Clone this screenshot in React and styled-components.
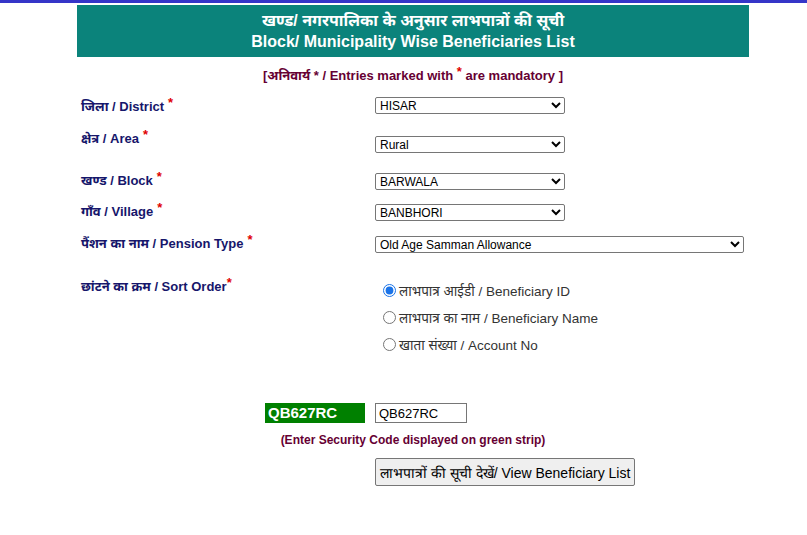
import React from 'react'
import styled, { createGlobalStyle } from 'styled-components'

const GlobalStyle = createGlobalStyle`
  body {
    margin: 0;
    background: #fff;
    font-family: Arial, "Liberation Sans", "Noto Sans", sans-serif;
  }
`

const TopBar = styled.div`
  height: 3px;
  background: #3535c8;
  margin-bottom: 2px;
`

const Page = styled.div`
  margin-left: 77px;
  width: 672px;
`

const Header = styled.div`
  background: #0b837b;
  height: 52px;
  display: flex;
  flex-direction: column;
  align-items: center;
  justify-content: center;
  color: #fff;
  font-weight: bold;
  font-size: 16px;
  line-height: 21px;
`

const Mandatory = styled.div`
  text-align: center;
  color: #660033;
  font-weight: bold;
  font-size: 13px;
  line-height: 16px;
  margin-top: 11px;
  margin-bottom: 7px;
`

const Star = styled.span`
  color: #e00000;
  font-weight: bold;
  position: relative;
  top: ${p => (p.$raised ? '-4px' : '0')};
  margin-left: ${p => (p.$tight ? '0' : '4px')};
`

const Row = styled.div`
  display: grid;
  grid-template-columns: 298px 1fr;
  height: ${p => p.$h}px;
  align-items: ${p => p.$align || 'center'};
  margin-top: ${p => p.$mt || 0}px;
`

const Label = styled.div`
  padding-left: 4px;
  color: #16166b;
  font-weight: bold;
  font-size: 13px;
  line-height: 16px;
  padding-bottom: ${p => p.$lift || 0}px;
  padding-top: ${p => p.$drop || 0}px;
`

const Select = styled.select`
  width: ${p => p.$w}px;
  height: 17px;
  box-sizing: border-box;
  font-family: Arial, "Liberation Sans", sans-serif;
  font-size: 12px;
  color: #000;
  border: 1px solid #767676;
  border-radius: 2px;
  background: #fff;
  padding: 0;
`

const RadioList = styled.div`
  display: flex;
  flex-direction: column;
  padding-left: 3px;
`

const RadioItem = styled.label`
  display: flex;
  align-items: center;
  height: 27px;
  font-size: 13.5px;
  color: #333;
`

const Radio = styled.input`
  width: 13px;
  height: 13px;
  margin: 0 3px 0 5px;
  accent-color: #1a73e8;
`

const CodeRow = styled.div`
  display: grid;
  grid-template-columns: 298px 1fr;
  align-items: center;
  margin-top: 44px;
`

const CodeStrip = styled.div`
  justify-self: end;
  margin-right: 10px;
  width: 100px;
  height: 20px;
  box-sizing: border-box;
  padding-left: 3px;
  background: #008000;
  color: #fff;
  font-weight: bold;
  font-size: 15px;
  line-height: 20px;
`

const CodeInput = styled.input`
  width: 92px;
  height: 20px;
  box-sizing: border-box;
  border: 1px solid #767676;
  padding: 0 3px;
  font-family: Arial, "Liberation Sans", sans-serif;
  font-size: 13px;
  color: #000;
`

const Note = styled.div`
  text-align: center;
  color: #660033;
  font-weight: bold;
  font-size: 12px;
  line-height: 16px;
  margin-top: 9px;
`

const ButtonRow = styled.div`
  padding-left: 298px;
  margin-top: 10px;
`

const Button = styled.button`
  height: 28px;
  padding: 0 4px;
  font-family: Arial, "Liberation Sans", sans-serif;
  font-size: 14px;
  color: #000;
  background: #efefef;
  border: 1px solid #767676;
  border-radius: 2px;
`

const fields = [
  { label: 'जिला / District', value: 'HISAR', h: 28, w: 190, drop: 4 },
  { label: 'क्षेत्र / Area', value: 'Rural', h: 50, w: 190, lift: 10 },
  { label: 'खण्ड / Block', value: 'BARWALA', h: 23, w: 190 },
  { label: 'गाँव / Village', value: 'BANBHORI', h: 39, w: 190 },
  { label: 'पैंशन का नाम / Pension Type', value: 'Old Age Samman Allowance', h: 25, w: 369 },
]

const sortOptions = [
  'लाभपात्र आईडी / Beneficiary ID',
  'लाभपात्र का नाम / Beneficiary Name',
  'खाता संख्या / Account No',
]

export default function App() {
  return (
    <>
      <GlobalStyle />
      <TopBar />
      <Page>
        <Header>
          <div>खण्ड/ नगरपालिका के अनुसार लाभपात्रों की सूची</div>
          <div>Block/ Municipality Wise Beneficiaries List</div>
        </Header>
        <Mandatory>
          [अनिवार्य * / Entries marked with <Star $raised $tight>*</Star> are mandatory ]
        </Mandatory>
        {fields.map(f => (
          <Row key={f.value} $h={f.h}>
            <Label $lift={f.lift} $drop={f.drop}>
              {f.label}
              <Star $raised>*</Star>
            </Label>
            <div>
              <Select $w={f.w} defaultValue={f.value}>
                <option>{f.value}</option>
              </Select>
            </div>
          </Row>
        ))}
        <Row $h={82} $align="start" $mt={21}>
          <Label $drop={2}>
            छांटने का क्रम / Sort Order<Star $raised $tight>*</Star>
          </Label>
          <RadioList>
            {sortOptions.map((o, i) => (
              <RadioItem key={o}>
                <Radio type="radio" name="sort" defaultChecked={i === 0} />
                {o}
              </RadioItem>
            ))}
          </RadioList>
        </Row>
        <CodeRow>
          <CodeStrip>QB627RC</CodeStrip>
          <div>
            <CodeInput defaultValue="QB627RC" />
          </div>
        </CodeRow>
        <Note>(Enter Security Code displayed on green strip)</Note>
        <ButtonRow>
          <Button>लाभपात्रों की सूची देखें/ View Beneficiary List</Button>
        </ButtonRow>
      </Page>
    </>
  )
}
